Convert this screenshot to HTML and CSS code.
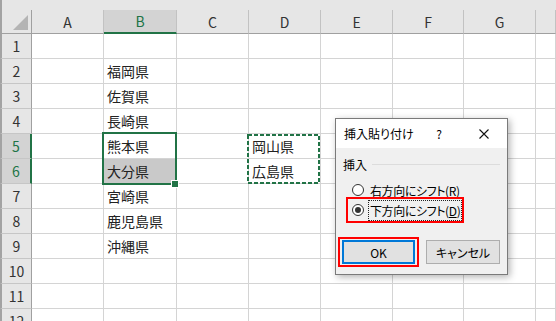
FILE: index.html
```html
<!DOCTYPE html>
<html lang="ja">
<head>
    <meta charset="UTF-8">
    <title>挿入貼り付け</title>
    <link rel="stylesheet" href="styles.css">
</head>
<body>
    <div class="window">
        <div class="strip"></div>
        <div class="sheet">
            <div class="row head">
                <div class="rh corner"><svg width="15" height="15" viewBox="0 0 15 15"><polygon points="0,15 15,15 15,0" fill="#b4b4b4"/></svg></div>
                <div class="ch">A</div>
                <div class="ch sel">B</div>
                <div class="ch">C</div>
                <div class="ch">D</div>
                <div class="ch">E</div>
                <div class="ch">F</div>
                <div class="ch">G</div>
                <div class="ch"></div>
            </div>
            <div class="row"><div class="rh">1</div><div class="c"></div><div class="c"></div><div class="c"></div><div class="c"></div><div class="c"></div><div class="c"></div><div class="c"></div><div class="c"></div></div>
            <div class="row"><div class="rh">2</div><div class="c"></div><div class="c">福岡県</div><div class="c"></div><div class="c"></div><div class="c"></div><div class="c"></div><div class="c"></div><div class="c"></div></div>
            <div class="row"><div class="rh">3</div><div class="c"></div><div class="c">佐賀県</div><div class="c"></div><div class="c"></div><div class="c"></div><div class="c"></div><div class="c"></div><div class="c"></div></div>
            <div class="row"><div class="rh">4</div><div class="c"></div><div class="c">長崎県</div><div class="c"></div><div class="c"></div><div class="c"></div><div class="c"></div><div class="c"></div><div class="c"></div></div>
            <div class="row"><div class="rh sel">5</div><div class="c"></div><div class="c">熊本県</div><div class="c"></div><div class="c">岡山県</div><div class="c"></div><div class="c"></div><div class="c"></div><div class="c"></div></div>
            <div class="row"><div class="rh sel">6</div><div class="c"></div><div class="c shade">大分県</div><div class="c"></div><div class="c">広島県</div><div class="c"></div><div class="c"></div><div class="c"></div><div class="c"></div></div>
            <div class="row"><div class="rh">7</div><div class="c"></div><div class="c">宮崎県</div><div class="c"></div><div class="c"></div><div class="c"></div><div class="c"></div><div class="c"></div><div class="c"></div></div>
            <div class="row"><div class="rh">8</div><div class="c"></div><div class="c">鹿児島県</div><div class="c"></div><div class="c"></div><div class="c"></div><div class="c"></div><div class="c"></div><div class="c"></div></div>
            <div class="row"><div class="rh">9</div><div class="c"></div><div class="c">沖縄県</div><div class="c"></div><div class="c"></div><div class="c"></div><div class="c"></div><div class="c"></div><div class="c"></div></div>
            <div class="row"><div class="rh">10</div><div class="c"></div><div class="c"></div><div class="c"></div><div class="c"></div><div class="c"></div><div class="c"></div><div class="c"></div><div class="c"></div></div>
            <div class="row"><div class="rh">11</div><div class="c"></div><div class="c"></div><div class="c"></div><div class="c"></div><div class="c"></div><div class="c"></div><div class="c"></div><div class="c"></div></div>
            <div class="row"><div class="rh">12</div><div class="c"></div><div class="c"></div><div class="c"></div><div class="c"></div><div class="c"></div><div class="c"></div><div class="c"></div><div class="c"></div></div>
        </div>

        <!-- selection B5:B6 -->
        <div class="selection"></div>
        <div class="fill-handle"></div>

        <!-- copied range D5:D6 -->
        <svg class="ants" width="73" height="50" viewBox="0 0 73 50">
            <rect x="1" y="1" width="71" height="48" fill="none" stroke="#217346" stroke-width="2" stroke-dasharray="4 2"/>
        </svg>

        <div class="dialog">
            <div class="dlg-title">
                <span class="dlg-name">挿入貼り付け</span>
                <span class="dlg-help">?</span>
                <span class="dlg-close"><svg width="10" height="10" viewBox="0 0 10 10"><path d="M0.5 0.5 L9.5 9.5 M9.5 0.5 L0.5 9.5" stroke="#111" stroke-width="1.1"/></svg></span>
            </div>
            <div class="dlg-body">
                <div class="group"><span>挿入</span><span class="group-line"></span></div>
                <div class="opt first">
                    <span class="radio"></span>
                    <span class="opt-label">右方向にシフト(<u>R</u>)</span>
                </div>
                <div class="opt mark">
                    <span class="radio on"></span>
                    <span class="opt-label focus">下方向にシフト(<u>D</u>)</span>
                </div>
                <div class="buttons">
                    <div class="btn-mark"><div class="btn default">OK</div></div>
                    <div class="btn">キャンセル</div>
                </div>
            </div>
        </div>
    </div>
</body>
</html>
```

FILE: styles.css
```css
body {
    margin: 0;
    overflow: hidden;
    background: #fff;
}
.window {
    position: relative;
    width: 556px;
    height: 321px;
    overflow: hidden;
    font-family: "Noto Sans CJK JP", "Noto Sans", sans-serif;
    color: #222;
}
.strip {
    height: 10px;
    background: #e6e6e6;
    border-left: 2px solid #a3a3a3;
}
.row {
    display: grid;
    grid-template-columns: 32px 72px 73px 72px 72px 72px 71px 72px 1fr;
    height: 25px;
}
.row.head {
    height: 24px;
}
.rh,
.ch,
.c {
    box-sizing: border-box;
    display: flex;
    align-items: center;
    font-size: 14px;
    border-bottom: 1px solid #d4d4d4;
    border-right: 1px solid #d4d4d4;
}
.rh {
    justify-content: center;
    background: #e6e6e6;
    border-left: 2px solid #a3a3a3;
    border-right: 1px solid #a0a0a0;
    border-bottom-color: #c6c6c6;
    color: #333;
}
.rh.sel {
    background: #d3d3d3;
    border-right: 2px solid #217346;
    color: #217346;
}
.rh.corner {
    justify-content: flex-end;
    align-items: flex-end;
    padding: 0 3px 3px 0;
    border-bottom: 1px solid #a0a0a0;
}
.ch {
    justify-content: center;
    background: #e6e6e6;
    border-right-color: #c2c2c2;
    border-bottom: 1px solid #a0a0a0;
    color: #333;
}
.ch.sel {
    background: #d3d3d3;
    border-bottom: 2px solid #217346;
    color: #217346;
}
.c {
    padding-left: 3px;
    white-space: nowrap;
}
.c.shade {
    background: #c9c9c9;
}

.selection {
    position: absolute;
    left: 102px;
    top: 132px;
    width: 75px;
    height: 53px;
    box-sizing: border-box;
    border: 2px solid #217346;
}
.fill-handle {
    position: absolute;
    left: 171px;
    top: 180px;
    width: 6px;
    height: 6px;
    background: #217346;
    border: 1px solid #fff;
}
.ants {
    position: absolute;
    left: 247px;
    top: 134px;
}

.dialog {
    position: absolute;
    left: 335px;
    top: 118px;
    width: 173px;
    height: 157px;
    box-sizing: border-box;
    border: 1px solid #7a7a7a;
    background: #f0f0f0;
    box-shadow: 2px 2px 7px rgba(0, 0, 0, 0.3);
    font-size: 12px;
    font-feature-settings: "palt";
    color: #000;
}
.dlg-title {
    height: 29px;
    background: #fff;
    display: flex;
    align-items: center;
    padding-left: 8px;
}
.dlg-name {
    flex: 1;
}
.dlg-help {
    width: 14px;
    text-align: center;
    margin-right: 23px;
}
.dlg-close {
    width: 30px;
    height: 29px;
    display: flex;
    align-items: center;
    justify-content: center;
    margin-right: 8px;
}
.dlg-body {
    display: flex;
    flex-direction: column;
}
.group {
    display: flex;
    align-items: center;
    gap: 5px;
    height: 16px;
    margin: 8px 7px 0 7px;
}
.group-line {
    flex: 1;
    height: 1px;
    background: #dcdcdc;
}
.opt {
    display: flex;
    align-items: center;
    align-self: flex-start;
}
.opt.first {
    height: 18px;
    margin: 9px 0 0 16px;
}
.opt.mark {
    margin: -2px 0 0 10px;
    height: 22px;
    padding: 0 0 0 4px;
    border: 2px solid #ff0000;
}
.radio {
    box-sizing: border-box;
    width: 12px;
    height: 12px;
    border: 1px solid #333;
    border-radius: 50%;
    background: #fff;
    display: flex;
    align-items: center;
    justify-content: center;
    margin-right: 4px;
}
.radio.on::after {
    content: "";
    width: 6px;
    height: 6px;
    border-radius: 50%;
    background: #333;
}
.opt-label {
    padding: 0 1px;
    line-height: 19px;
    letter-spacing: -0.4px;
    border: 1px dotted transparent;
}
.opt-label.focus {
    border-color: #222;
}
.buttons {
    display: flex;
    align-items: center;
    margin: 14px 0 0 2px;
}
.btn-mark {
    border: 2px solid #ff0000;
    padding: 1px 2px;
}
.btn {
    box-sizing: border-box;
    width: 74px;
    height: 24px;
    display: flex;
    align-items: center;
    justify-content: center;
    background: #e1e1e1;
    border: 1px solid #adadad;
    margin-left: 7px;
}
.btn.default {
    width: 73px;
    margin-left: 0;
    border: 2px solid #0078d7;
}
```
